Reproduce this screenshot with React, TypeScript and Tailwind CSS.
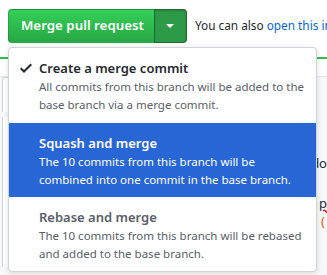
const options = [
  {
    title: 'Create a merge commit',
    desc: 'All commits from this branch will be added to the base branch via a merge commit.',
    checked: true,
    active: false,
  },
  {
    title: 'Squash and merge',
    desc: 'The 10 commits from this branch will be combined into one commit in the base branch.',
    checked: false,
    active: true,
  },
  {
    title: 'Rebase and merge',
    desc: 'The 10 commits from this branch will be rebased and added to the base branch.',
    checked: false,
    active: false,
  },
]

const CheckIcon = () => (
  <svg width="12" height="16" viewBox="0 0 12 16" className="fill-current">
    <path d="M12 5l-8 8-4-4 1.5-1.5L4 10l6.5-6.5L12 5z" />
  </svg>
)

export default function App() {
  return (
    <div className="relative h-[275px] w-[327px] overflow-hidden bg-white font-['Noto_Sans',sans-serif]">
      {/* merge box header */}
      <div className="flex h-[57px] items-start gap-[8px] overflow-hidden px-2 pt-[9px]">
        <div className="flex shrink-0">
          <button className="flex h-[34px] items-center whitespace-nowrap rounded-l-[4px] border border-[rgba(27,31,35,0.2)] bg-linear-to-b from-[#34d058] to-[#28a745] pl-3 pr-[10px] text-[13.3px] font-semibold text-white">
            Merge pull request
          </button>
          <button className="-ml-px flex h-[34px] w-[33px] items-center justify-center rounded-r-[4px] border border-[rgba(27,31,35,0.4)] bg-[#2c9a46] shadow-[inset_0_1px_2px_rgba(0,0,0,0.15)]">
            <span className="h-0 w-0 border-x-[4px] border-t-[4px] border-x-transparent border-t-white" />
          </button>
        </div>
        <p className="mt-[8px] shrink-0 whitespace-nowrap text-[11.8px] text-[#24292e]">
          You can also <span className="text-[#0366d6]">open this in</span>
        </p>
      </div>
      <div className="h-[2px] bg-[#2cbe4e]" />
      <div className="flex h-[18px] items-end">
        <div className="h-px w-full bg-[#e1e4e8]" />
      </div>
      <div className="h-[198px] bg-[#f6f8fa] pl-[2px]">
        <div className="h-[35px] w-4 rounded-tl-[3px] border-l border-t border-[#d1d5da] bg-white" />
        <div className="mt-[5px] h-[150px] w-4 border-l border-[#d1d5da] bg-white" />
        <div className="absolute right-0 top-[154px] text-[13px] text-[#24292e]">do</div>
        <div className="absolute right-0 top-[194px] text-[13px] text-[#24292e] underline decoration-wavy decoration-red-600">p</div>
        <div className="absolute right-[2px] top-[212px] text-[13px] text-[#e36209]">(</div>
      </div>

      {/* dropdown menu */}
      <div className="absolute left-2 top-[47px] w-[309px] overflow-hidden rounded-[4px] border border-[#d1d5da] bg-white shadow-[0_1px_5px_rgba(27,31,35,0.15)]">
        {options.map((o, i) => (
          <div
            key={o.title}
            className={`relative pb-[8px] pl-[30px] pr-3 pt-[10px] ${
              o.active ? 'bg-[#2866d6] text-white' : ''
            } ${i > 0 && !o.active && !options[i - 1].active ? 'border-t border-[#eaecef]' : ''} ${
              i === 1 ? 'mt-px' : ''
            }`}
          >
            {o.checked && (
              <span className="absolute left-[11px] top-[12px] text-[#24292e]">
                <CheckIcon />
              </span>
            )}
            <div
              className={`text-[13px] font-semibold leading-[20px] ${
                o.active ? 'text-white' : o.checked ? 'text-[#24292e]' : 'text-[#586069]'
              }`}
            >
              {o.title}
            </div>
            <div className={`text-[11.5px] leading-[18px] ${o.active ? 'text-white' : 'text-[#586069]'}`}>
              {o.desc}
            </div>
          </div>
        ))}
      </div>
    </div>
  )
}
